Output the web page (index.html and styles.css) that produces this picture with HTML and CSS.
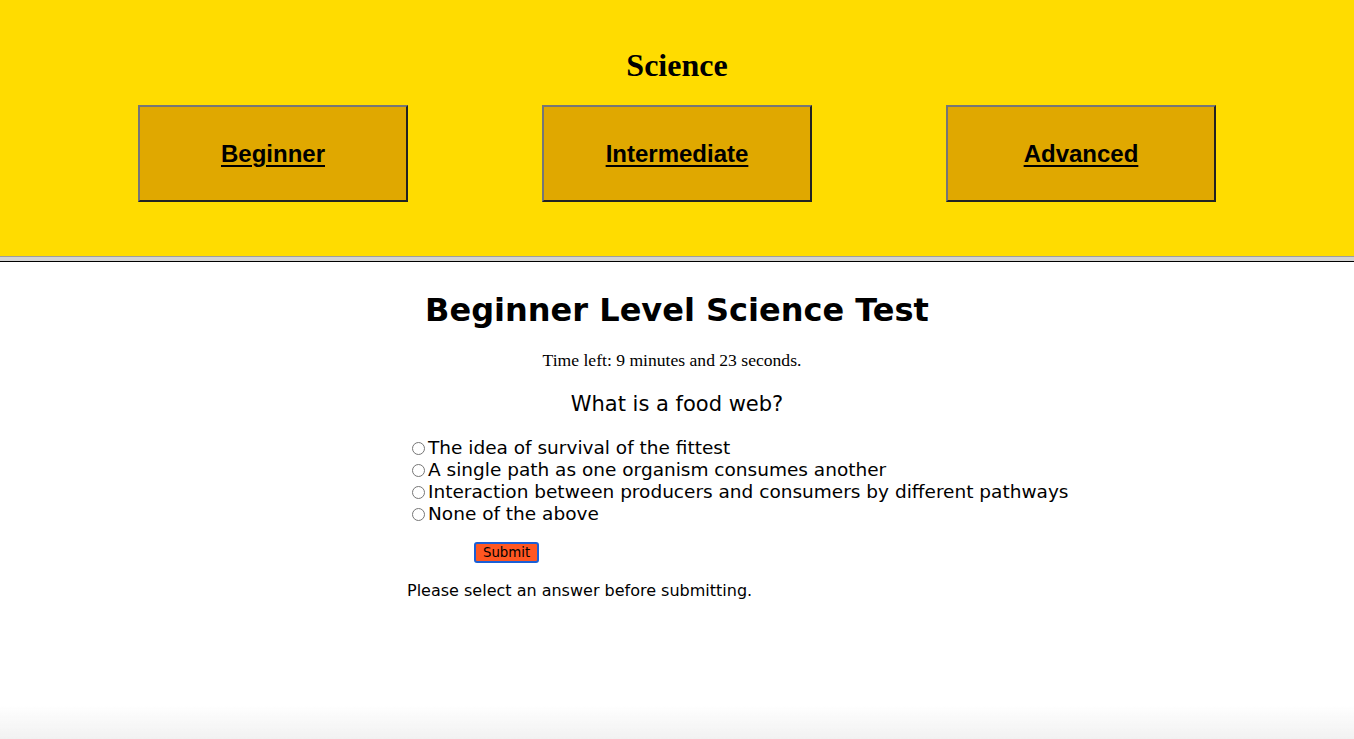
FILE: index.html
```html
<!DOCTYPE html>
<html lang="en">
<head>
<meta charset="utf-8">
<title>Beginner Level Science Test</title>
<link rel="stylesheet" href="styles.css">
</head>
<body>
<header class="site-header">
  <h1 class="subject">Science</h1>
  <nav class="levels">
    <a class="level-btn" href="#">Beginner</a>
    <a class="level-btn" href="#">Intermediate</a>
    <a class="level-btn" href="#">Advanced</a>
  </nav>
</header>
<div class="divider"></div>
<main class="quiz">
  <h2 class="quiz-title">Beginner Level Science Test</h2>
  <p class="timer">Time left: 9 minutes and 23 seconds.</p>
  <p class="question">What is a food web?</p>
  <form class="options">
    <label class="option"><input type="radio" name="a">The idea of survival of the fittest</label>
    <label class="option"><input type="radio" name="a">A single path as one organism consumes another</label>
    <label class="option"><input type="radio" name="a">Interaction between producers and consumers by different pathways</label>
    <label class="option"><input type="radio" name="a">None of the above</label>
    <button class="submit" type="button">Submit</button>
  </form>
  <p class="message">Please select an answer before submitting.</p>
</main>
</body>
</html>
```

FILE: styles.css
```css
html, body {
  margin: 0;
  padding: 0;
  background: #ffffff;
  min-height: 100%;
}
body {
  font-family: "DejaVu Sans", Verdana, sans-serif;
  color: #000;
}
body::after {
  content: "";
  position: fixed;
  left: 0;
  right: 0;
  bottom: 0;
  height: 34px;
  background: linear-gradient(to bottom, rgba(240,240,240,0), rgba(240,240,240,0.9));
  pointer-events: none;
}
.site-header {
  background: #ffdc00;
  padding: 47px 0 54px;
}
.subject {
  margin: 0;
  font-family: "Liberation Serif", "Times New Roman", serif;
  font-size: 32px;
  font-weight: bold;
  text-align: center;
  line-height: 37px;
}
.levels {
  display: flex;
  justify-content: center;
  gap: 134px;
  margin-top: 21px;
}
.level-btn {
  box-sizing: border-box;
  width: 270px;
  height: 97px;
  display: flex;
  align-items: center;
  justify-content: center;
  background: #e0a800;
  border: 2px solid;
  border-color: #767676 #222222 #222222 #767676;
  font-family: "Liberation Sans", Arial, sans-serif;
  font-weight: bold;
  font-size: 24px;
  color: #000;
  text-decoration: underline;
  text-decoration-thickness: 2px;
  text-underline-offset: 3px;
}
.divider {
  height: 4px;
  background: #d3d3d3;
  border-top: 1px solid #9e9e9e;
  border-bottom: 1px solid #000;
}
.quiz {
  width: 540px;
  margin: 0 auto;
}
.quiz-title {
  margin: 29px 0 0;
  font-size: 32px;
  font-weight: bold;
  text-align: center;
  line-height: 38px;
  white-space: nowrap;
}
.timer {
  margin: 21px 0 0;
  padding-right: 10px;
  font-family: "Liberation Serif", "Times New Roman", serif;
  font-size: 17.6px;
  text-align: center;
  line-height: 20px;
}
.question {
  margin: 22px 0 0;
  font-size: 21px;
  text-align: center;
  line-height: 25px;
}
.options {
  margin-top: 20px;
  display: flex;
  flex-direction: column;
  align-items: flex-start;
}
.option {
  font-size: 18.5px;
  line-height: 22px;
  white-space: nowrap;
  display: flex;
  align-items: center;
}
.option input {
  margin: 1px 3px 0 5px;
  width: 13px;
  height: 13px;
}
.submit {
  margin: 17px 0 0 67px;
  background: #ff5722;
  border: 2px solid #1a5fd6;
  border-radius: 3px;
  font-family: "DejaVu Sans", Verdana, sans-serif;
  font-size: 13.3px;
  padding: 1px 7px;
  height: 21px;
  color: #000;
}
.message {
  margin: 18px 0 0;
  font-size: 16px;
  line-height: 20px;
}
```
